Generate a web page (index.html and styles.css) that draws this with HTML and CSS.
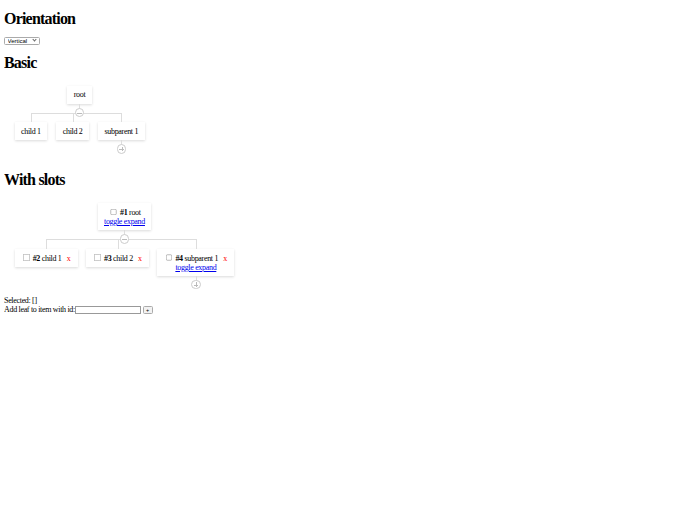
FILE: index.html
```html
<!DOCTYPE html>
<html lang="en">
<head>
    <meta charset="UTF-8">
    <title>Tree demo</title>
    <link rel="stylesheet" href="styles.css">
</head>
<body>
    <h1 class="first">Orientation</h1>
    <span class="select-wrap">
        <select class="orientation">
            <option>Vertical</option>
            <option>Horizontal</option>
        </select>
    </span>

    <h1>Basic</h1>
    <div class="tree tree-basic">
        <div class="branch">
            <div class="node">root</div>
            <div class="stem"><span class="toggle minus"></span></div>
            <div class="children">
                <div class="child"><div class="node">child 1</div></div>
                <div class="child"><div class="node">child 2</div></div>
                <div class="child">
                    <div class="node">subparent 1</div>
                    <div class="stem"><span class="toggle plus"></span></div>
                </div>
            </div>
        </div>
    </div>

    <h1>With slots</h1>
    <div class="tree tree-slots">
        <div class="branch">
            <div class="node">
                <input type="checkbox"> <b>#1</b> root<br>
                <a href="#">toggle expand</a>
            </div>
            <div class="stem"><span class="toggle minus"></span></div>
            <div class="children">
                <div class="child">
                    <div class="node"><input type="checkbox"> <b>#2</b> child 1 <span class="remove">x</span></div>
                </div>
                <div class="child">
                    <div class="node"><input type="checkbox"> <b>#3</b> child 2 <span class="remove">x</span></div>
                </div>
                <div class="child">
                    <div class="node">
                        <input type="checkbox"> <b>#4</b> subparent 1 <span class="remove">x</span><br>
                        <a href="#">toggle expand</a>
                    </div>
                    <div class="stem"><span class="toggle plus"></span></div>
                </div>
            </div>
        </div>
    </div>

    <div>Selected: []</div>
    <div>Add leaf to item with id:<input type="text" class="leaf-id"> <button class="add">+</button></div>
</body>
</html>
```

FILE: styles.css
```css
html {
    zoom: 0.5;
}
body {
    margin: 8px;
    font-family: "Liberation Serif", "Times New Roman", serif;
    font-size: 16px;
    letter-spacing: -0.04em;
    color: #000;
}
h1 {
    margin: 20px 0;
    line-height: 32px;
    letter-spacing: -0.05em;
}
h1.first {
    margin: 14px 0 17px;
}
select, input, button {
    font-family: "Liberation Sans", Arial, sans-serif;
    font-size: 13px;
    letter-spacing: 0;
}
.select-wrap {
    position: relative;
    display: inline-block;
    vertical-align: top;
}
.select-wrap::after {
    content: "";
    position: absolute;
    right: 8px;
    top: 4px;
    width: 4px;
    height: 4px;
    border-right: 1px solid #666;
    border-bottom: 1px solid #666;
    transform: rotate(45deg);
    pointer-events: none;
}
.orientation {
    appearance: none;
    width: 72px;
    height: 16px;
    padding: 0 0 0 5px;
    border: 1px solid #aaa;
    border-radius: 3px;
    background: #fff;
    color: #000;
    font-size: 12px;
    line-height: 14px;
}
.tree {
    display: flex;
    padding: 10px 12px 25px;
}
.tree-slots {
    padding: 11px 13px 23px;
}
.branch, .child {
    display: flex;
    flex-direction: column;
    align-items: center;
}
.node {
    background: #fff;
    padding: 9px 13px;
    box-shadow: 0 1px 5px rgba(0,0,0,0.15);
    text-align: center;
    white-space: nowrap;
}
.tree-slots .node {
    padding: 8px 13px;
}
.node a {
    color: #00e;
}
.remove {
    color: red;
    margin-left: 7px;
    padding-right: 2px;
}
.stem {
    position: relative;
    width: 1px;
    height: 18px;
    background: #ddd;
}
.toggle {
    position: absolute;
    z-index: 1;
    left: 0;
    bottom: 0;
    width: 19px;
    height: 19px;
    box-sizing: border-box;
    margin: 0 0 -9px -9px;
    border: 1px solid #ccc;
    border-radius: 50%;
    background: #fff;
}
.toggle::before, .plus::after {
    content: "";
    position: absolute;
    background: #bbb;
}
.toggle::before { left: 3px; right: 3px; top: 8px; height: 1px; }
.plus::after { top: 3px; bottom: 3px; left: 8px; width: 1px; }
.children {
    display: flex;
    align-items: flex-start;
}
.child {
    position: relative;
    padding: 19px 9px 0;
}
.tree-slots .child {
    padding: 19px 8px 0;
}
.child::before {
    content: "";
    position: absolute;
    top: 0;
    left: 0;
    right: 0;
    border-top: 1px solid #ddd;
}
.child:first-child::before { left: 50%; }
.child:last-child::before { right: 50%; }
.child::after {
    content: "";
    position: absolute;
    top: 0;
    left: 50%;
    height: 19px;
    border-left: 1px solid #ddd;
}
.leaf-id {
    width: 132px;
    height: 16px;
    box-sizing: border-box;
    padding: 0 2px;
    border: 1px solid #999;
    vertical-align: middle;
}
.add {
    width: 20px;
    height: 16px;
    padding: 0;
    border: 1px solid #aaa;
    border-radius: 3px;
    background: #f2f2f2;
    font-size: 11px;
    line-height: 14px;
    vertical-align: middle;
}
```
